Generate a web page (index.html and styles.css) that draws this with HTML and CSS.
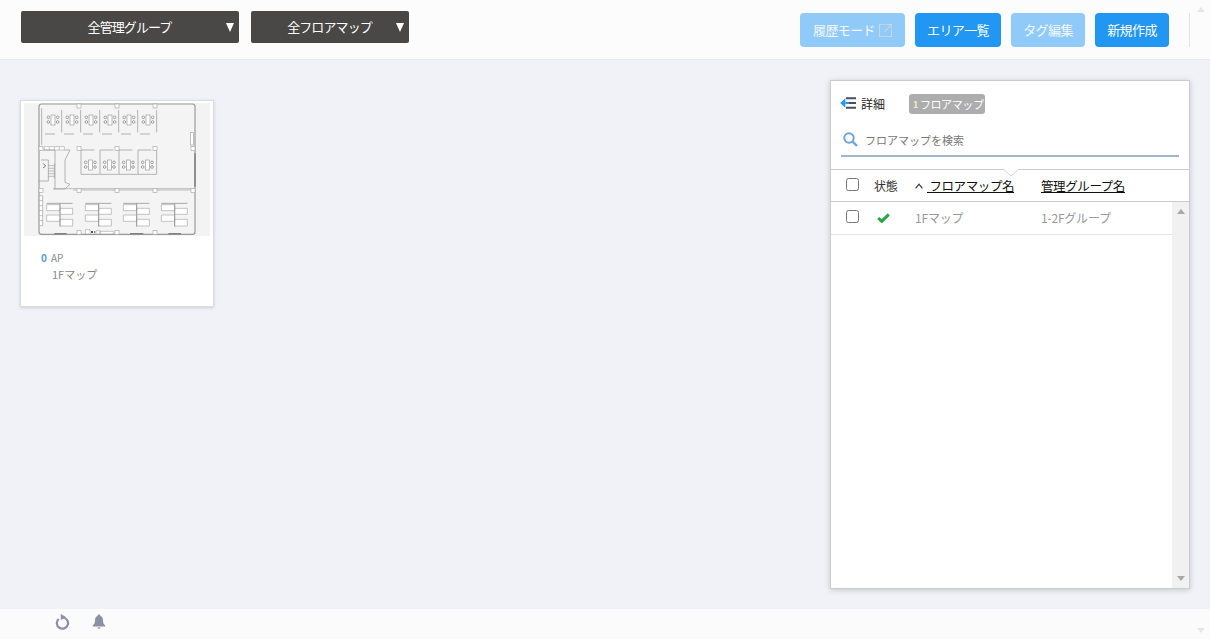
FILE: index.html
```html
<!DOCTYPE html>
<html lang="ja">
<head>
<meta charset="utf-8">
<title>フロアマップ</title>
<link rel="stylesheet" href="styles.css">
</head>
<body>
<div class="page">
  <header class="topbar">
    <div class="selects">
      <div class="select select-group"><span class="select-label">全管理グループ</span><span class="select-arrow"></span></div>
      <div class="select select-map"><span class="select-label">全フロアマップ</span><span class="select-arrow"></span></div>
    </div>
    <div class="actions">
      <button class="btn btn-off btn-history">履歴モード
        <svg class="ext-icon" viewBox="0 0 12 12"><path d="M6 0.5H0.5V11.5H11.5V6M7 0.5H11.5V5M11.5 0.5L5 7" fill="none" stroke="#c9d6e2" stroke-width="1"/></svg>
      </button>
      <button class="btn btn-area">エリア一覧</button>
      <button class="btn btn-off btn-tag">タグ編集</button>
      <button class="btn btn-new">新規作成</button>
      <span class="divider"></span>
    </div>
  </header>

  <main class="content">
    <article class="card">
      <div class="thumb">
        <svg class="plan" viewBox="27 24 558 399">
          <defs>
            <g id="seat">
              <rect x="0" y="0" width="12" height="30" fill="#fff" stroke="#999" stroke-width="2"/>
              <circle cx="-8" cy="7" r="4" fill="none" stroke="#888" stroke-width="2.2"/>
              <circle cx="-8" cy="21" r="4" fill="none" stroke="#888" stroke-width="2.2"/>
              <circle cx="20" cy="7" r="4" fill="none" stroke="#888" stroke-width="2.2"/>
              <circle cx="20" cy="21" r="4" fill="none" stroke="#888" stroke-width="2.2"/>
            </g>
            <g id="cell-top">
              <use href="#seat" x="22" y="15"/>
              <path d="M54 0V67M4 72H34" fill="none" stroke="#a2a2a2" stroke-width="2.4"/>
            </g>
            <g id="cell-mid">
              <use href="#seat" x="22" y="30"/>
              <path d="M0 0H40M0 0V73H56" fill="none" stroke="#a2a2a2" stroke-width="2.4"/>
            </g>
            <g id="desks">
              <path d="M0 4H40V22H0zM40 15H78V33H40zM0 35H40V54H0zM40 48H78V68H40z" fill="#fff" stroke="#a8a8a8" stroke-width="2"/>
              <path d="M0 0H78M40 0V70" fill="none" stroke="#8a8a8a" stroke-width="2.2"/>
            </g>
            <rect id="pillar" x="-6" y="-6" width="12" height="12" fill="#fff" stroke="#aaa" stroke-width="2"/>
          </defs>
          <rect x="72" y="27" width="468" height="391" rx="8" fill="#f4f4f4" stroke="#999" stroke-width="3.5"/>
          <path d="M80 40V150" stroke="#a2a2a2" stroke-width="2.4" fill="none"/>
          <use href="#cell-top" x="86" y="45"/>
          <use href="#cell-top" x="143" y="45"/>
          <use href="#cell-top" x="200" y="45"/>
          <use href="#cell-top" x="257" y="45"/>
          <use href="#cell-top" x="314" y="45"/>
          <use href="#cell-top" x="371" y="45"/>
          <use href="#cell-mid" x="198" y="165"/>
          <use href="#cell-mid" x="255" y="165"/>
          <use href="#cell-mid" x="312" y="165"/>
          <use href="#cell-mid" x="369" y="165"/>
          <path d="M425 165V238" stroke="#a2a2a2" stroke-width="2.4" fill="none"/>
          <path d="M88 155H148V165H88zM103 155V165M118 155V165M133 155V165" fill="#fff" stroke="#aaa" stroke-width="2"/>
          <path d="M72 165H120V282M148 165H165L150 195V262L165 268L150 282H115M72 258H100V195H78" fill="none" stroke="#a2a2a2" stroke-width="2.4"/>
          <path d="M100 212H118M100 220H118M100 228H118M100 236H118M100 244H118M118 205V250" fill="none" stroke="#999" stroke-width="1.8"/>
          <path d="M84 205L92 213L84 219" fill="none" stroke="#555" stroke-width="2.4"/>
          <path d="M115 281H540M175 285H540" fill="none" stroke="#a2a2a2" stroke-width="2"/>
          <path d="M540 175V275" stroke="#808080" stroke-width="4.5" fill="none"/>
          <rect x="526" y="113" width="9" height="37" fill="#fff" stroke="#a2a2a2" stroke-width="2"/>
          <path d="M73 302H83V392H73zM73 317H83M73 332H83M73 347H83M73 362H83M73 377H83" fill="#fff" stroke="#a2a2a2" stroke-width="2"/>
          <use href="#desks" x="95" y="325"/>
          <use href="#desks" x="211" y="325"/>
          <use href="#desks" x="325" y="325"/>
          <use href="#desks" x="439" y="325"/>
          <use href="#pillar" x="192" y="33"/>
          <use href="#pillar" x="306" y="33"/>
          <use href="#pillar" x="420" y="33"/>
          <use href="#pillar" x="78" y="160"/>
          <use href="#pillar" x="192" y="160"/>
          <use href="#pillar" x="306" y="160"/>
          <use href="#pillar" x="420" y="160"/>
          <use href="#pillar" x="534" y="160"/>
          <use href="#pillar" x="78" y="286"/>
          <use href="#pillar" x="192" y="286"/>
          <use href="#pillar" x="306" y="286"/>
          <use href="#pillar" x="420" y="286"/>
          <use href="#pillar" x="534" y="286"/>
          <use href="#pillar" x="192" y="412"/>
          <use href="#pillar" x="306" y="412"/>
          <use href="#pillar" x="420" y="412"/>
          <path d="M118 416H155M345 416H385M460 416H498" stroke="#808080" stroke-width="3.5" fill="none"/>
          <path d="M211 404H225V417H211zM243 407H255V417H243zM255 409H295V417H255z" fill="#fff" stroke="#a2a2a2" stroke-width="1.8"/>
          <circle cx="231" cy="411" r="3" fill="#222"/>
          <circle cx="239" cy="411" r="2.2" fill="#444"/>
        </svg>
      </div>
      <div class="card-body">
        <div class="ap-line"><b class="ap-count">0</b><span class="ap-label">AP</span></div>
        <div class="card-name">1Fマップ</div>
      </div>
    </article>

    <section class="panel">
      <div class="panel-head">
        <svg class="back-icon" viewBox="0 0 16 12"><path d="M5.4 1.2L0.2 6L5.4 10.8z" fill="#2196f3"/><path d="M5.4 6H9" stroke="#2196f3" stroke-width="2" fill="none"/><path d="M6 1.2H16M9 6H16M6 10.8H16" stroke="#4a5060" stroke-width="1.9" fill="none"/></svg>
        <span class="detail">詳細</span>
        <span class="badge"><span class="badge-num">1</span>フロアマップ</span>
      </div>
      <div class="search">
        <svg class="search-icon" viewBox="0 0 15 15"><circle cx="6" cy="6" r="4.7" fill="none" stroke="#6ea4d8" stroke-width="2"/><path d="M9.5 9.5L14 14" stroke="#6ea4d8" stroke-width="2.4"/></svg>
        <span class="search-text">フロアマップを検索</span>
      </div>
      <div class="table">
        <svg class="notch" viewBox="0 0 16 8"><path d="M0 0L8 7L16 0" fill="#fff" stroke="#d4d4d4" stroke-width="1"/></svg>
        <div class="row head-row">
          <span class="col-check"><input type="checkbox" class="check"></span>
          <span class="col-state head-state">状態</span>
          <span class="col-name"><svg class="caret" viewBox="0 0 8 6"><path d="M0.6 5.4L4 1.2L7.4 5.4" fill="none" stroke="#333" stroke-width="1.1"/></svg><a class="sort-link">&nbsp;フロアマップ名</a></span>
          <span class="col-group"><a class="sort-link">管理グループ名</a></span>
        </div>
        <div class="table-body">
          <div class="rows">
            <div class="row data-row">
              <span class="col-check"><input type="checkbox" class="check"></span>
              <span class="col-state"><svg class="ok-icon" viewBox="0 0 13 10"><path d="M1.2 5L4.8 8.4L11.8 1.4" fill="none" stroke="#28a745" stroke-width="3"/></svg></span>
              <span class="col-name cell-text">1Fマップ</span>
              <span class="col-group cell-text">1-2Fグループ</span>
            </div>
          </div>
          <div class="scrollbar">
            <span class="arrow-up"></span>
            <span class="arrow-down"></span>
          </div>
        </div>
      </div>
    </section>
  </main>

  <footer class="footer">
    <svg class="foot-icon refresh" viewBox="0 0 15 16"><path d="M3.6 5A5.6 5.6 0 1 0 8 3.5" fill="none" stroke="#8b90a8" stroke-width="2.2"/><path d="M5.8 0L11 3L5.8 6z" fill="#8b90a8"/></svg>
    <svg class="foot-icon bell" viewBox="0 0 14 15"><path d="M7 0.5C8 0.5 8.4 1.2 8.5 2C10.6 2.8 11 4.6 11 6.6C11 9 11.8 10.4 13.2 11.6V12.4H0.8V11.6C2.2 10.4 3 9 3 6.6C3 4.6 3.4 2.8 5.5 2C5.6 1.2 6 0.5 7 0.5z" fill="#8b90a8"/><path d="M5.4 13.4H8.6C8.4 14.4 7.8 14.8 7 14.8C6.2 14.8 5.6 14.4 5.4 13.4z" fill="#8b90a8"/></svg>
  </footer>
  <span class="page-arrow page-up"></span>
  <span class="page-arrow page-down"></span>
</div>
</body>
</html>
```

FILE: styles.css
```css
* { box-sizing: border-box; }
html, body { margin: 0; height: 100%; overflow: hidden; }
body {
  font-family: "Noto Sans CJK JP", "Noto Sans", sans-serif;
  font-size: 12px;
  color: #333;
  background: #f0f2f7;
}
.page {
  position: relative;
  height: 639px;
  display: flex;
  flex-direction: column;
}

/* top bar */
.topbar {
  height: 60px;
  flex: none;
  background: #fcfcfc;
  border-bottom: 1px solid #e8e8e8;
  display: flex;
  justify-content: space-between;
  padding: 11px 20px 0 21px;
}
.selects { display: flex; gap: 12px; align-items: flex-start; }
.select {
  position: relative;
  height: 32px;
  background: #4a4846;
  border-radius: 2px;
  color: #fff;
  font-size: 13px;
  letter-spacing: -0.9px;
  display: flex;
  align-items: center;
  justify-content: center;
}
.select-label { margin: 0 1px 1px 0; }
.select-group { width: 218px; }
.select-map { width: 158px; }
.select-arrow {
  position: absolute;
  right: 5px;
  top: 12px;
  border-left: 4px solid transparent;
  border-right: 4px solid transparent;
  border-top: 9px solid #fff;
}
.actions { display: flex; gap: 10px; align-items: flex-start; padding-top: 2px; }
.btn {
  height: 34px;
  border: 0;
  border-radius: 4px;
  background: #2196f3;
  color: #fff;
  font-family: inherit;
  font-size: 13px;
  letter-spacing: -0.6px;
  padding: 0 0 2px;
  display: flex;
  align-items: center;
  justify-content: center;
}
.btn-off { background: #90caf9; color: #f2f8fd; }
.btn-history { width: 105px; gap: 4px; }
.btn-area { width: 86px; }
.btn-tag { width: 74px; }
.btn-new { width: 74px; }
.ext-icon { width: 13px; height: 13px; margin-top: 2px; }
.divider { width: 1px; height: 34px; background: #e3e3e3; margin-left: 10px; }

/* main */
.content {
  flex: 1;
  display: flex;
  justify-content: space-between;
  padding: 20px;
  min-height: 0;
}
.card {
  width: 194px;
  height: 207px;
  margin-top: 20px;
  background: #fff;
  border: 1px solid #ddd;
  box-shadow: 0 1px 3px rgba(0, 0, 0, 0.15);
  padding: 2px 3px 0;
}
.thumb { height: 133px; background: #f3f3f3; }
.plan { display: block; width: 186px; height: 133px; filter: blur(0.35px); }
.card-body { padding: 15px 0 0 17px; }
.ap-line { display: flex; align-items: center; gap: 4px; height: 14px; font-size: 10px; line-height: 14px; }
.ap-count { color: #5b9bd5; font-weight: 700; }
.ap-label { color: #888; }
.card-name { margin: 0 0 0 11px; font-size: 11px; color: #888; line-height: 18px; }

/* panel */
.panel {
  width: 360px;
  background: #fff;
  border: 1px solid #ccc;
  box-shadow: 0 1px 6px rgba(0, 0, 0, 0.18);
  display: flex;
  flex-direction: column;
}
.panel-head {
  height: 46px;
  flex: none;
  display: flex;
  align-items: center;
  padding: 0 0 0 9px;
}
.back-icon { width: 16px; height: 12px; margin-bottom: 2px; }
.detail { margin: 0 0 2px 5px; font-size: 12px; color: #222; width: 48px; }
.badge {
  width: 76px;
  height: 20px;
  background: #adadad;
  border-radius: 3px;
  color: #fff;
  font-size: 11px;
  letter-spacing: -0.4px;
  display: flex;
  align-items: center;
  padding-left: 4px;
}
.badge-num { color: #f4ecc8; font-size: 9px; font-weight: 700; margin-right: 2px; }
.search {
  height: 30px;
  margin: 0 10px 0 10px;
  border-bottom: 2px solid #a3b5c6;
  display: flex;
  align-items: center;
  padding: 0 0 3px 2px;
  flex: none;
}
.search-icon { width: 15px; height: 15px; }
.search-text { margin-left: 7px; font-size: 11px; color: #777; letter-spacing: 0; }
.table { position: relative; flex: 1; display: flex; flex-direction: column; margin-top: 12px; border-top: 1px solid #ccc; min-height: 0; }
.notch { position: absolute; left: 172px; top: -1px; width: 16px; height: 8px; }
.row { display: flex; align-items: center; }
.head-row { height: 32px; flex: none; border-bottom: 1px solid #ccc; }
.col-check { width: 43px; padding-left: 15px; display: flex; }
.head-row .col-check { padding-bottom: 2px; }
.data-row .col-check { padding-bottom: 3px; }
.col-state { width: 41px; display: flex; }
.col-name { width: 126px; display: flex; align-items: center; }
.col-group { flex: 1; }
.check { margin: 0; width: 13px; height: 13px; }
.head-state { font-size: 12px; color: #333; letter-spacing: -0.2px; }
.caret { width: 8px; height: 6px; margin-right: 4px; }
.sort-link { color: #111; font-size: 12.5px; letter-spacing: -0.4px; text-decoration: underline; }
.table-body { flex: 1; display: flex; min-height: 0; }
.rows { flex: 1; }
.data-row { height: 33px; border-bottom: 1px solid #e5e5e5; }
.ok-icon { width: 13px; height: 10px; margin-left: 3px; }
.cell-text { font-size: 12px; color: #999; letter-spacing: -0.2px; padding-bottom: 2px; }
.scrollbar {
  width: 17px;
  background: #f1f1f1;
  display: flex;
  flex-direction: column;
  justify-content: space-between;
  align-items: center;
  padding: 7px 0;
}
.arrow-up { border-left: 4px solid transparent; border-right: 4px solid transparent; border-bottom: 5px solid #a8a8a8; }
.arrow-down { border-left: 4px solid transparent; border-right: 4px solid transparent; border-top: 5px solid #a8a8a8; }

/* footer */
.footer {
  height: 30px;
  flex: none;
  background: #fbfbfb;
  display: flex;
  align-items: flex-start;
  padding: 5px 0 0 55px;
  gap: 22px;
}
.foot-icon { width: 14px; height: 15px; }
.refresh { width: 15px; height: 16px; }
.page-arrow { position: absolute; right: 5px; border-left: 4px solid transparent; border-right: 4px solid transparent; }
.page-up { top: 7px; border-bottom: 5px solid #e6e6e6; }
.page-down { top: 628px; border-top: 5px solid #e6e6e6; }
```
